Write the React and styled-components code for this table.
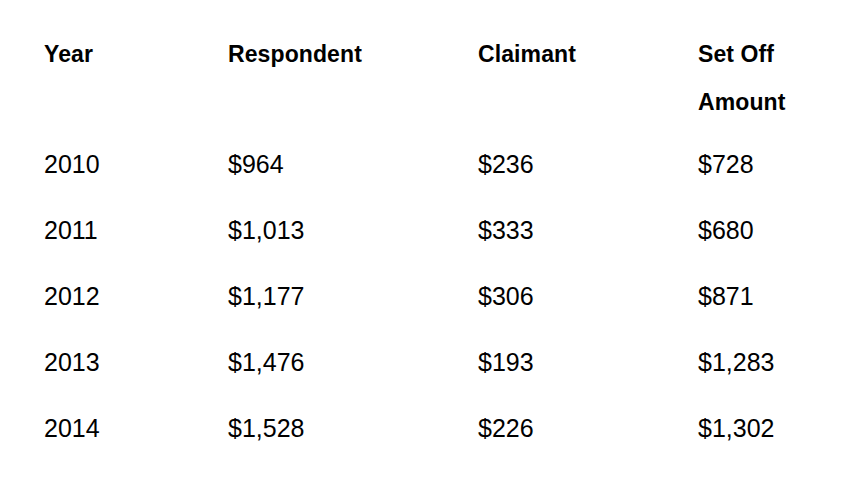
import styled, { createGlobalStyle } from "styled-components";

const GlobalStyle = createGlobalStyle`
  body {
    margin: 0;
    background: #fff;
    font-family: "Liberation Sans", Arial, sans-serif;
    color: #000;
  }
`;

const Wrapper = styled.div`
  padding: 30px 0 0 44px;
`;

const Table = styled.div`
  display: grid;
  grid-template-columns: 184px 250px 220px 120px;
`;

const HeadCell = styled.div`
  font-size: 23px;
  font-weight: 700;
  line-height: 48px;
  padding-bottom: 5px;
  letter-spacing: 0.1px;
`;

const Cell = styled.div`
  font-size: 25px;
  line-height: 48px;
  padding: 9px 0;
`;

const headers = ["Year", "Respondent", "Claimant", ["Set Off", "Amount"]];

const rows = [
  ["2010", "$964", "$236", "$728"],
  ["2011", "$1,013", "$333", "$680"],
  ["2012", "$1,177", "$306", "$871"],
  ["2013", "$1,476", "$193", "$1,283"],
  ["2014", "$1,528", "$226", "$1,302"],
];

const App = () => {
  return (
    <Wrapper>
      <GlobalStyle />
      <Table>
        {headers.map((h, i) => (
          <HeadCell key={i}>
            {Array.isArray(h) ? (
              <>
                {h[0]}
                <br />
                {h[1]}
              </>
            ) : (
              h
            )}
          </HeadCell>
        ))}
        {rows.map((row) =>
          row.map((value, j) => <Cell key={row[0] + j}>{value}</Cell>)
        )}
      </Table>
    </Wrapper>
  );
};

export default App;
